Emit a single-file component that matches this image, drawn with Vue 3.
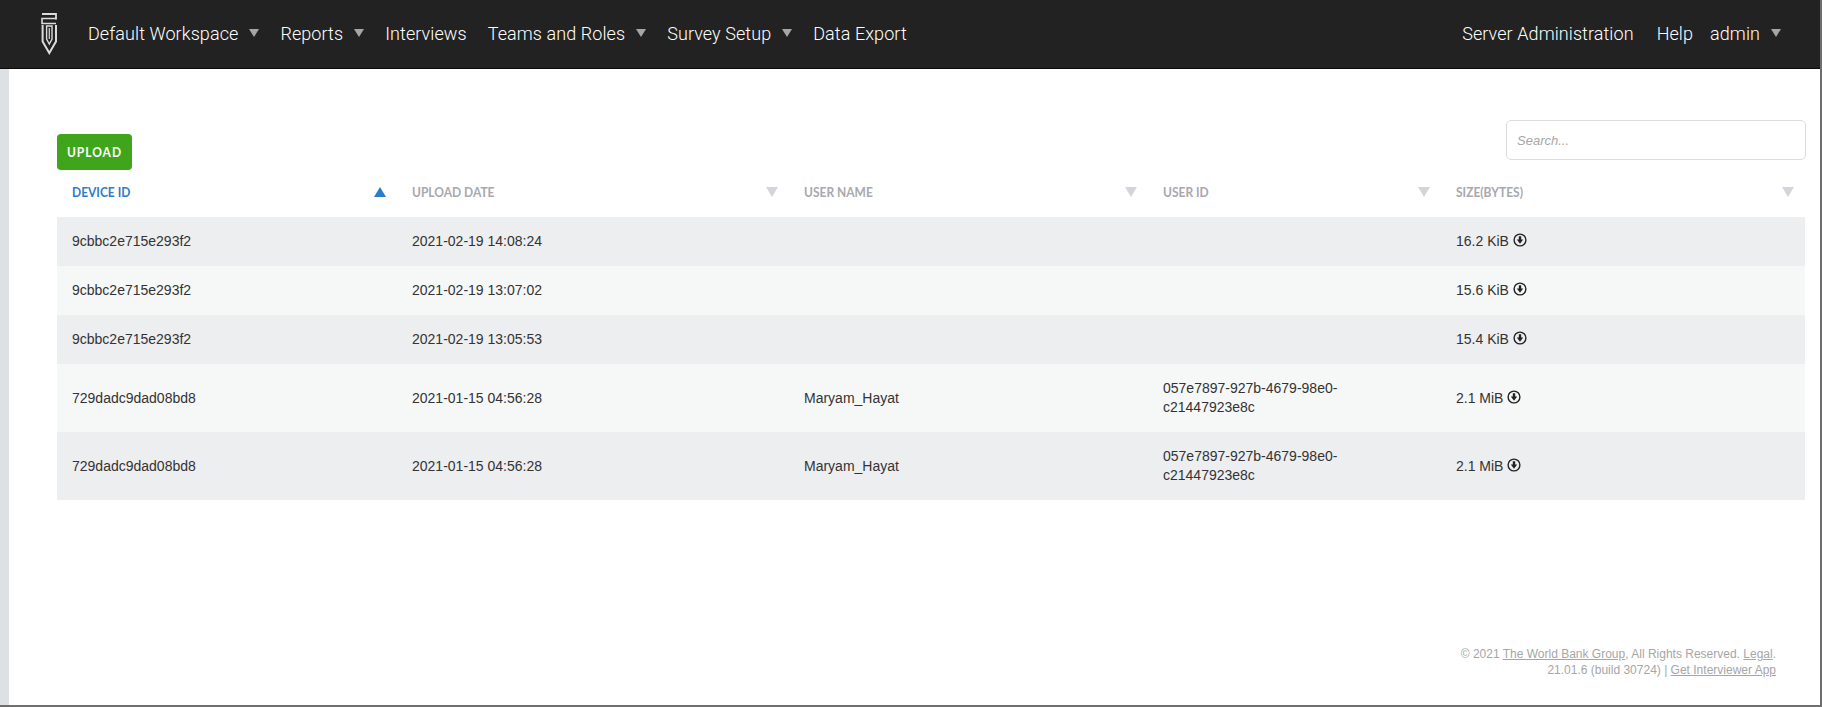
<template>
  <div class="page">
    <header class="navbar">
      <a class="brand" href="#">
        <svg width="16" height="43" viewBox="0 0 16 43" fill="none" stroke="#dcdcdc">
          <path d="M1 2H15V7.5" stroke-width="1.8" />
          <path d="M15.5 6.5H1V11.5H15" stroke-width="1.6" />
          <path d="M1.6 13V29.5L8.3 41L15 29.5V13" stroke-width="2" />
          <path d="M5.6 14V27L8.3 32L11 27V14Z" stroke-width="1.4" />
          <path d="M8.3 16V27" stroke-width="1.2" />
        </svg>
      </a>
      <nav class="nav-left">
        <a v-for="item in leftMenu" :key="item.label" class="nav-item" href="#">
          {{ item.label }}<span v-if="item.caret" class="caret"></span>
        </a>
      </nav>
      <nav class="nav-right">
        <a class="nav-item" href="#">Server Administration</a>
        <a class="nav-item" href="#">Help</a>
        <a class="nav-item user" href="#">admin<span class="caret"></span></a>
      </nav>
    </header>

    <main class="content">
      <div class="toolbar">
        <button class="btn-upload"><span class="tall">UPLOAD</span></button>
        <input class="search" type="text" placeholder="Search..." />
      </div>

      <table class="data-table">
        <colgroup>
          <col v-for="col in columns" :key="col.label" :style="{ width: col.width + 'px' }" />
        </colgroup>
        <thead>
          <tr>
            <th v-for="col in columns" :key="col.label" :class="{ sorted: col.sorted }">
              <div class="th-inner">
                <span class="tall">{{ col.label }}</span>
                <span class="sort-arrow"></span>
              </div>
            </th>
          </tr>
        </thead>
        <tbody>
          <tr v-for="(row, i) in rows" :key="i">
            <td>{{ row.device }}</td>
            <td>{{ row.date }}</td>
            <td>{{ row.user }}</td>
            <td><div class="user-id">{{ row.userId }}</div></td>
            <td>
              {{ row.size }}
              <svg class="download" width="14" height="14" viewBox="0 0 14 14">
                <circle cx="7" cy="7" r="5.9" fill="none" stroke="#222" stroke-width="1.4" />
                <path d="M5.8 3.2H8.2V6.6H10.2L7 10.8L3.8 6.6H5.8Z" fill="#222" />
              </svg>
            </td>
          </tr>
        </tbody>
      </table>

      <footer class="footer">
        <p>© 2021 <a href="#">The World Bank Group</a>, All Rights Reserved. <a href="#">Legal</a>.</p>
        <p>21.01.6 (build 30724) | <a href="#">Get Interviewer App</a></p>
      </footer>
    </main>
  </div>
</template>

<script setup>
const leftMenu = [
  { label: 'Default Workspace', caret: true },
  { label: 'Reports', caret: true },
  { label: 'Interviews', caret: false },
  { label: 'Teams and Roles', caret: true },
  { label: 'Survey Setup', caret: true },
  { label: 'Data Export', caret: false }
]

const columns = [
  { label: 'DEVICE ID', width: 340, sorted: true },
  { label: 'UPLOAD DATE', width: 392 },
  { label: 'USER NAME', width: 359 },
  { label: 'USER ID', width: 293 },
  { label: 'SIZE(BYTES)', width: 364 }
]

const rows = [
  { device: '9cbbc2e715e293f2', date: '2021-02-19 14:08:24', user: '', userId: '', size: '16.2 KiB' },
  { device: '9cbbc2e715e293f2', date: '2021-02-19 13:07:02', user: '', userId: '', size: '15.6 KiB' },
  { device: '9cbbc2e715e293f2', date: '2021-02-19 13:05:53', user: '', userId: '', size: '15.4 KiB' },
  { device: '729dadc9dad08bd8', date: '2021-01-15 04:56:28', user: 'Maryam_Hayat', userId: '057e7897-927b-4679-98e0-c21447923e8c', size: '2.1 MiB' },
  { device: '729dadc9dad08bd8', date: '2021-01-15 04:56:28', user: 'Maryam_Hayat', userId: '057e7897-927b-4679-98e0-c21447923e8c', size: '2.1 MiB' }
]
</script>

<style>
html, body {
  margin: 0;
  background: #fff;
}
</style>

<style scoped>
.page {
  width: 1822px;
  height: 707px;
  box-sizing: border-box;
  overflow: hidden;
  display: flex;
  flex-direction: column;
  font-family: "Liberation Sans", Arial, sans-serif;
  border-right: 2px solid #6f6f6f;
  border-bottom: 2px solid #6f6f6f;
}

.navbar {
  height: 69px;
  flex: none;
  box-sizing: border-box;
  padding-bottom: 2px;
  background: #222;
  border-bottom: 1px solid #0b0b0b;
  display: flex;
  align-items: center;
}

.brand {
  display: flex;
  width: 78px;
  padding-left: 41px;
  box-sizing: border-box;
}

.nav-left {
  display: flex;
  margin-left: 10px;
  gap: 21px;
}

.nav-right {
  display: flex;
  margin-left: auto;
  gap: 23px;
  padding-right: 39px;
}

.nav-item {
  color: #fff;
  text-decoration: none;
  font-family: Roboto, sans-serif;
  font-size: 18px;
  font-weight: 300;
  letter-spacing: 0.08px;
  white-space: nowrap;
  display: flex;
  align-items: center;
}

.nav-item.user {
  margin-left: -6px;
}

.caret {
  width: 0;
  height: 0;
  margin-left: 11px;
  border-left: 5px solid transparent;
  border-right: 5px solid transparent;
  border-top: 8px solid #a6a6a6;
}

.content {
  flex: 1;
  border-left: 9px solid #dee1e4;
  padding: 51px 15px 0 48px;
  display: flex;
  flex-direction: column;
  min-height: 0;
}

.toolbar {
  display: flex;
  justify-content: space-between;
  align-items: flex-start;
  height: 50px;
}

.btn-upload {
  margin-top: 14px;
  width: 75px;
  height: 36px;
  background: #3fa61b;
  color: #fff;
  border: none;
  border-radius: 4px;
  padding: 0 0 2px;
  font-family: Lato, sans-serif;
  font-size: 12px;
  font-weight: 700;
  letter-spacing: 1px;
}

.tall {
  display: inline-block;
  transform: scaleY(1.12);
}

.search {
  width: 300px;
  height: 40px;
  margin-right: -1px;
  box-sizing: border-box;
  border: 1px solid #dcdcdc;
  border-radius: 5px;
  padding: 0 10px;
  font-family: "Liberation Sans", Arial, sans-serif;
  font-size: 13px;
  font-style: italic;
  outline: none;
}

.search::placeholder {
  color: #a6a6a6;
}

.data-table {
  width: 1748px;
  table-layout: fixed;
  border-collapse: collapse;
  color: #333;
  font-size: 14px;
  line-height: 19px;
}

th {
  height: 47px;
  padding: 0 7px 4px 15px;
  box-sizing: border-box;
  text-align: left;
  font-family: Lato, sans-serif;
  font-size: 12px;
  font-weight: 700;
  color: #a8a8ae;
}

th.sorted {
  color: #2c7cc8;
}

.th-inner {
  display: flex;
  justify-content: space-between;
  align-items: center;
}

.sort-arrow {
  width: 0;
  height: 0;
  margin-right: 4px;
  border-left: 6px solid transparent;
  border-right: 6px solid transparent;
  border-top: 10px solid #d2d5d9;
}

th.sorted .sort-arrow {
  border-top: none;
  border-bottom: 10px solid #2c7cc8;
}

td {
  height: 49px;
  padding: 0 15px;
  box-sizing: border-box;
  vertical-align: middle;
}

tbody tr:nth-child(odd) {
  background: #edeef0;
}

tbody tr:nth-child(even) {
  background: #f6f8f8;
}

tbody tr:nth-child(n + 4) td {
  height: 68px;
}

.user-id {
  max-width: 190px;
  overflow-wrap: anywhere;
}

.download {
  vertical-align: -1px;
}

.footer {
  margin-top: auto;
  padding: 0 29px 27px 0;
  text-align: right;
  font-size: 12px;
  line-height: 16px;
  color: #a6a6a6;
}

.footer p {
  margin: 0;
}

.footer a {
  color: #a6a6a6;
}
</style>
